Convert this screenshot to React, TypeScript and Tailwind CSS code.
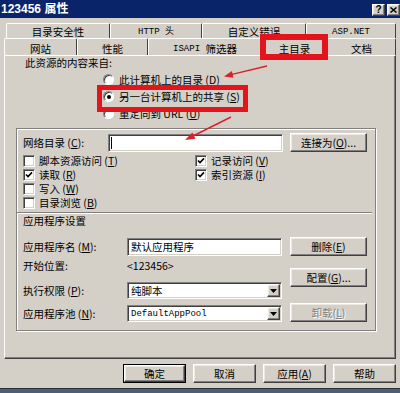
import React from 'react'

const ui = "font-['Noto_Sans_CJK_SC','Liberation_Sans',sans-serif] text-[10.5px] leading-[14px] text-black"
const mono = "font-['Liberation_Mono','Noto_Sans_CJK_SC',monospace] text-[9px]"
const raised =
  'border border-t-white border-l-white border-r-[#404040] border-b-[#404040] bg-[#d4d0c8] shadow-[inset_-1px_-1px_0_#808080,inset_1px_1px_0_#ebe9e4]'
const sunken =
  'border border-t-[#808080] border-l-[#808080] border-r-white border-b-white bg-white shadow-[inset_1px_1px_0_#404040,inset_-1px_-1px_0_#d4d0c8]'

function Key({ k }: { k: string }) {
  return (
    <span>
      (<span className="underline underline-offset-1">{k}</span>)
    </span>
  )
}

function Btn({
  children,
  className = '',
  disabled = false,
}: {
  children: React.ReactNode
  className?: string
  disabled?: boolean
}) {
  return (
    <div
      className={`flex h-[19px] items-center justify-center ${raised} ${
        disabled ? 'text-[#808080] [text-shadow:1px_1px_0_#fff]' : ''
      } ${className}`}
    >
      {children}
    </div>
  )
}

function Check({ on = false }: { on?: boolean }) {
  return (
    <div className={`flex h-[12px] w-[12px] shrink-0 items-center justify-center ${sunken}`}>
      {on && (
        <svg width="8" height="8" viewBox="0 0 8 8">
          <path d="M1 3.5 L3 5.6 L7 1.4" stroke="black" strokeWidth="1.6" fill="none" />
        </svg>
      )}
    </div>
  )
}

function Radio({ on = false }: { on?: boolean }) {
  return (
    <div className="flex h-[11px] w-[11px] shrink-0 items-center justify-center rounded-full border border-t-[#808080] border-l-[#808080] border-r-white border-b-white bg-white shadow-[inset_1px_1px_0_#404040]">
      {on && <div className="h-[4px] w-[4px] rounded-full bg-black" />}
    </div>
  )
}

function Select({ children, valueClass = '' }: { children: React.ReactNode; valueClass?: string }) {
  return (
    <div className={`flex h-[17px] w-[155px] items-center ${sunken}`}>
      <span className={`flex-1 pl-[3px] ${valueClass}`}>{children}</span>
      <div className={`mr-[1px] flex h-[13px] w-[13px] items-center justify-center ${raised}`}>
        <svg width="7" height="4" viewBox="0 0 7 4">
          <path d="M0 0 H7 L3.5 4 Z" fill="black" />
        </svg>
      </div>
    </div>
  )
}

function Tab({ children, className = '' }: { children: React.ReactNode; className?: string }) {
  return (
    <div
      className={`flex h-full justify-center rounded-t-[2px] border-t border-l border-r border-t-white border-l-white border-r-[#404040] bg-[#d4d0c8] ${className}`}
    >
      {children}
    </div>
  )
}

export default function App() {
  return (
    <div className={`relative flex h-[393px] w-[400px] flex-col overflow-hidden bg-[#d4d0c8] ${ui}`}>
      {/* title bar */}
      <div className="flex h-[18px] shrink-0 items-center justify-between bg-[#0a246a]">
        <span className="pl-[1px] font-['Liberation_Sans','Noto_Sans_CJK_SC',sans-serif] text-[12px] font-bold text-white">
          123456 属性
        </span>
        <div className="flex gap-[2px] pt-[1px]">
          <div className={`flex h-[12px] w-[13px] items-center justify-center ${raised} font-['Liberation_Sans',sans-serif] text-[10px] leading-none font-bold`}>
            ?
          </div>
          <div className={`flex h-[12px] w-[13px] items-center justify-center ${raised}`}>
            <svg width="7" height="6" viewBox="0 0 7 6">
              <path d="M0.5 0.5 L6.5 5.5 M6.5 0.5 L0.5 5.5" stroke="black" strokeWidth="1.5" />
            </svg>
          </div>
        </div>
      </div>

      {/* tab rows */}
      <div className="mt-[5px] ml-[6px] flex h-[15px] shrink-0">
        <Tab className="w-[104px] pt-[1px]">目录安全性</Tab>
        <Tab className={`w-[92px] pt-[1px] ${mono} text-[9.5px] leading-[14px]`}>HTTP 头</Tab>
        <Tab className="w-[104px] pt-[1px]">自定义错误</Tab>
        <Tab className={`w-[90px] pt-[1px] ${mono} text-[9.5px] leading-[14px]`}>ASP.NET</Tab>
      </div>
      <div className="ml-[4px] flex h-[17px] shrink-0 items-end">
        <Tab className="w-[73px] pt-[3px]">网站</Tab>
        <Tab className="w-[71px] pt-[3px]">性能</Tab>
        <Tab className="w-[114px] pt-[3px]">
          <span className={`${mono} text-[9.5px] leading-[14px]`}>ISAPI&nbsp;</span>筛选器
        </Tab>
        <div className="relative z-10 -mb-[1px] flex h-[20px] w-[65px] justify-center rounded-t-[2px] border-t border-l border-r border-t-white border-l-white border-r-[#404040] bg-[#d4d0c8] pt-[5px]">
          主目录
        </div>
        <Tab className="w-[69px] pt-[3px]">文档</Tab>
      </div>

      {/* tab panel */}
      <div className="mx-[4px] flex h-[304px] shrink-0 flex-col border border-t-white border-l-white border-r-[#404040] border-b-[#404040] shadow-[inset_-1px_-1px_0_#808080]">
        <div className="ml-[20px] h-[14px]">此资源的内容来自:</div>
        <div className="mt-[1px] ml-[98px] flex flex-col">
          <div className="flex h-[17px] items-center gap-[5px]">
            <Radio />
            <span>
              此计算机上的目录 <Key k="D" />
            </span>
          </div>
          <div className="flex h-[17px] items-center gap-[5px]">
            <Radio on />
            <span>
              另一台计算机上的共享 <Key k="S" />
            </span>
          </div>
          <div className="flex h-[17px] items-center gap-[5px]">
            <Radio />
            <span>
              重定向到 URL <Key k="U" />
            </span>
          </div>
        </div>

        {/* group */}
        <div className="mt-[6px] ml-[11px] flex h-[203px] w-[360px] flex-col border border-[#808080] shadow-[inset_1px_1px_0_#fff,1px_1px_0_#fff]">
          <div className="mt-[4px] flex h-[19px] items-center pl-[6px]">
            <span className="w-[85px]">
              网络目录 <Key k="C" />:
            </span>
            <div className={`relative h-[18px] w-[175px] ${sunken}`}>
              <div className="absolute top-[2px] left-[2px] h-[12px] w-[1px] bg-black" />
            </div>
            <Btn className="ml-[7px] w-[77px]">
              连接为 <Key k="O" />...
            </Btn>
          </div>

          <div className="mt-[2px] flex pl-[6px]">
            <div className="flex w-[172px] flex-col">
              <div className="flex h-[14px] items-center gap-[4px]">
                <Check />
                <span>
                  脚本资源访问 <Key k="T" />
                </span>
              </div>
              <div className="flex h-[14px] items-center gap-[4px]">
                <Check on />
                <span>
                  读取 <Key k="R" />
                </span>
              </div>
              <div className="flex h-[14px] items-center gap-[4px]">
                <Check />
                <span>
                  写入 <Key k="W" />
                </span>
              </div>
              <div className="flex h-[14px] items-center gap-[4px]">
                <Check />
                <span>
                  目录浏览 <Key k="B" />
                </span>
              </div>
            </div>
            <div className="flex flex-col">
              <div className="flex h-[14px] items-center gap-[4px]">
                <Check on />
                <span>
                  记录访问 <Key k="V" />
                </span>
              </div>
              <div className="flex h-[14px] items-center gap-[4px]">
                <Check on />
                <span>
                  索引资源 <Key k="I" />
                </span>
              </div>
            </div>
          </div>

          <div className="mt-[2px] mr-[3px] h-[2px] border-t border-b border-t-[#808080] border-b-white" />
          <div className="h-[14px] pl-[6px]">应用程序设置</div>

          <div className="mt-[9px] flex pl-[6px]">
            <div className="flex w-[259px] flex-col">
              <div className="flex h-[19px] items-center">
                <span className="w-[104px]">
                  应用程序名 <Key k="M" />:
                </span>
                <div className={`flex h-[18px] w-[155px] items-center pl-[3px] ${sunken}`}>默认应用程序</div>
              </div>
              <div className="mt-[3px] flex h-[14px] items-center">
                <span className="w-[104px]">开始位置:</span>
                <span>&lt;123456&gt;</span>
              </div>
              <div className="mt-[9px] flex h-[17px] items-center">
                <span className="w-[104px]">
                  执行权限 <Key k="P" />:
                </span>
                <Select>纯脚本</Select>
              </div>
              <div className="mt-[6px] flex h-[17px] items-center">
                <span className="w-[104px]">
                  应用程序池 <Key k="N" />:
                </span>
                <Select valueClass={mono}>DefaultAppPool</Select>
              </div>
            </div>
            <div className="ml-[8px] flex w-[77px] flex-col">
              <Btn>
                删除 <Key k="E" />
              </Btn>
              <Btn className="mt-[12px]">
                配置 <Key k="G" />...
              </Btn>
              <Btn className="mt-[16px]" disabled>
                卸载 <Key k="L" />
              </Btn>
            </div>
          </div>
        </div>
      </div>

      {/* dialog buttons */}
      <div className="mt-[5px] flex justify-end gap-[7px] pr-[4px]">
        <div className="h-[19px] w-[63px] border border-black">
          <Btn className="h-full">确定</Btn>
        </div>
        <Btn className="w-[63px]">取消</Btn>
        <Btn className="w-[63px]">
          应用 <Key k="A" />
        </Btn>
        <Btn className="w-[63px]">帮助</Btn>
      </div>

      <div className="mt-auto h-[5px] border-t border-t-[#303030] bg-[#4a6078]" />

      {/* red annotations */}
      <div className="pointer-events-none absolute top-[34px] left-[260px] z-20 h-[26px] w-[68px] border-[6px] border-[#e3141b]" />
      <div className="pointer-events-none absolute top-[85px] left-[97px] z-20 h-[27px] w-[151px] border-[5px] border-[#e3141b]" />
      <svg className="pointer-events-none absolute inset-0 z-20" width="400" height="393" viewBox="0 0 400 393">
        <line x1="267" y1="66" x2="232" y2="74.4" stroke="#d8222a" strokeWidth="1.4" />
        <polygon points="224,76.5 233.5,77.8 231.9,71" fill="#d8222a" />
        <line x1="231" y1="117" x2="194" y2="135.5" stroke="#d8222a" strokeWidth="1.4" />
        <polygon points="185,140 195.5,138.7 192.4,132.4" fill="#d8222a" />
      </svg>
    </div>
  )
}
